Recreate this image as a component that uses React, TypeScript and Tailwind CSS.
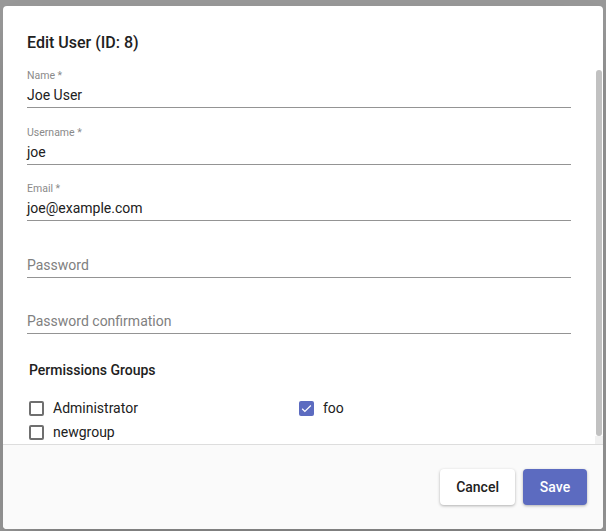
import React from "react";

type Field = {
  label: string;
  value?: string;
};

const fields: Field[] = [
  { label: "Name *", value: "Joe User" },
  { label: "Username *", value: "joe" },
  { label: "Email *", value: "joe@example.com" },
  { label: "Password" },
  { label: "Password confirmation" },
];

const groups = [
  { name: "Administrator", checked: false },
  { name: "foo", checked: true },
  { name: "newgroup", checked: false },
];

function TextField({ field, first }: { field: Field; first: boolean }) {
  const filled = field.value !== undefined;
  return (
    <div className={first ? "mt-[7px]" : "mt-[15.5px]"}>
      <div className="h-[18px] text-[10.5px] leading-[17px] text-[#8a8a8a]">
        {filled ? field.label : ""}
      </div>
      <div className="h-[20px] pb-[2px] box-content border-b border-[#949494]">
        <span
          className={`block text-[14px] leading-[20px] ${
            filled ? "text-[#212121]" : "text-[#808080]"
          }`}
        >
          {filled ? field.value : field.label}
        </span>
      </div>
    </div>
  );
}

function Checkbox({ checked }: { checked: boolean }) {
  if (checked) {
    return (
      <span className="w-[15px] h-[15px] rounded-[2px] bg-[#5c6bc0] flex items-center justify-center">
        <svg width="13" height="13" viewBox="0 0 24 24" fill="none">
          <path d="M4 12.5l5 5L20 6.5" stroke="white" strokeWidth="2.2" />
        </svg>
      </span>
    );
  }
  return <span className="w-[15px] h-[15px] rounded-[2px] border-2 border-[#6f6f6f] box-border" />;
}

export default function App() {
  return (
    <div className="w-[606px] h-[531px] bg-[#999999] pt-[6px] pl-[3px] font-['Roboto',sans-serif]">
      <div className="w-[600px] bg-white rounded-[4px] shadow-2xl flex flex-col overflow-hidden">
        <div className="px-6 pt-6 pb-1">
          <h2 className="text-[16px] leading-[26px] font-medium text-[#212121]">Edit User (ID: 8)</h2>
        </div>

        <div className="h-[384px] flex">
          <div className="flex-1 px-6 overflow-hidden">
            {fields.map((f, i) => (
              <TextField key={f.label} field={f} first={i === 0} />
            ))}

            <div className="px-[2px]">
              <div className="mt-[26px] text-[14px] leading-[20px] font-medium text-[#212121]">
                Permissions Groups
              </div>
              <div className="mt-4 grid grid-cols-2">
                {groups.map((g) => (
                  <label key={g.name} className="h-6 flex items-center">
                    <Checkbox checked={g.checked} />
                    <span className="ml-[9px] text-[14px] text-[#212121]">{g.name}</span>
                  </label>
                ))}
              </div>
            </div>
          </div>

          {/* scrollbar */}
          <div className="w-2 flex flex-col">
            <div className="h-[10px] bg-white" />
            <div className="h-[366px] mx-[1px] rounded-[3px] bg-[#c1c1c1]" />
            <div className="flex-1 bg-[#f1f1f1]" />
          </div>
        </div>

        <div className="border-t border-[#dddddd] bg-[#fafafa] flex justify-end gap-2 px-4 py-6">
          <button className="h-9 min-w-[64px] px-4 rounded-[4px] bg-white text-[14px] font-medium text-[#212121] shadow-[0_1px_3px_rgba(0,0,0,0.3)]">
            Cancel
          </button>
          <button className="h-9 min-w-[64px] px-4 rounded-[4px] bg-[#5c6bc0] text-[14px] font-medium text-white shadow-[0_1px_3px_rgba(0,0,0,0.3)]">
            Save
          </button>
        </div>
      </div>
    </div>
  );
}
